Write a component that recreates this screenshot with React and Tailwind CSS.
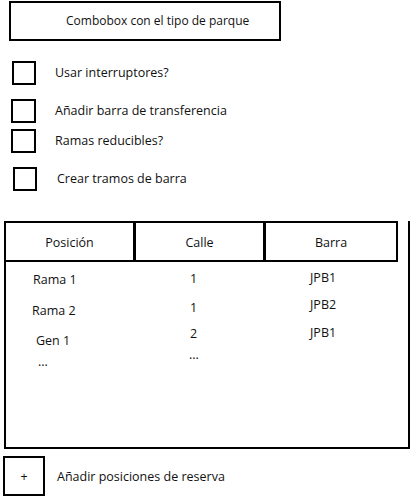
import React from 'react';

const Check = ({ className = '' }) => (
  <div className={`w-[24px] h-[24px] shrink-0 border-2 border-black ${className}`} />
);

const App = () => {
  return (
    <div className="w-[412px] h-[499px] overflow-hidden bg-white text-[12.5px] leading-[18px] text-[#111] font-['Open_Sans',sans-serif]">
      {/* Combobox */}
      <div className="ml-[9px] mt-[1px] w-[272px] h-[40px] border-2 border-black flex items-center pl-[55px] text-[12px]">
        Combobox con el tipo de parque
      </div>

      {/* Opciones */}
      <div className="flex items-center gap-[19px] ml-[12px] mt-[20px]">
        <Check />
        <span>Usar interruptores?</span>
      </div>
      <div className="flex items-center gap-[19px] ml-[11px] mt-[14px]">
        <Check className="w-[25px]" />
        <span>Añadir barra de transferencia</span>
      </div>
      <div className="flex items-center gap-[19px] ml-[11px] mt-[6px]">
        <Check className="w-[25px]" />
        <span>Ramas reducibles?</span>
      </div>
      <div className="flex items-center gap-[20px] ml-[13px] mt-[14px]">
        <Check />
        <span>Crear tramos de barra</span>
      </div>

      {/* Tabla */}
      <div className="ml-[4px] mt-[30px] w-[406px] h-[228px] border-x-2 border-b-2 border-black">
        <div className="flex h-[41px]">
          <div className="w-[130px] pt-[3px] border-y-2 border-r-[3px] border-black flex items-center justify-center">Posición</div>
          <div className="w-[130px] pt-[3px] border-y-2 border-r-[3px] border-black flex items-center justify-center">Calle</div>
          <div className="w-[132px] pt-[3px] border-y-2 border-r-2 border-black flex items-center justify-center">Barra</div>
        </div>
        <div className="flex">
          <div className="w-[130px] flex flex-col pt-[9px]">
            <span className="ml-[27px]">Rama 1</span>
            <span className="ml-[26px] mt-[13px]">Rama 2</span>
            <span className="ml-[30px] mt-[12px]">Gen 1</span>
            <span className="ml-[32px] mt-[3px]">...</span>
          </div>
          <div className="w-[130px] flex flex-col pt-[8px]">
            <span className="ml-[54px]">1</span>
            <span className="ml-[54px] mt-[11px]">1</span>
            <span className="ml-[54px] mt-[8px]">2</span>
            <span className="ml-[53px] mt-[3px]">...</span>
          </div>
          <div className="w-[132px] flex flex-col pt-[7px]">
            <span className="ml-[44px]">JPB1</span>
            <span className="ml-[44px] mt-[9px]">JPB2</span>
            <span className="ml-[44px] mt-[10px]">JPB1</span>
          </div>
        </div>
      </div>

      {/* Reserva */}
      <div className="flex items-center gap-[12px] ml-[3px] mt-[7px]">
        <div className="w-[42px] h-[40px] pt-[1px] border-2 border-black flex items-center justify-center">+</div>
        <span className="pt-[1px]">Añadir posiciones de reserva</span>
      </div>
    </div>
  );
};

export default App;
